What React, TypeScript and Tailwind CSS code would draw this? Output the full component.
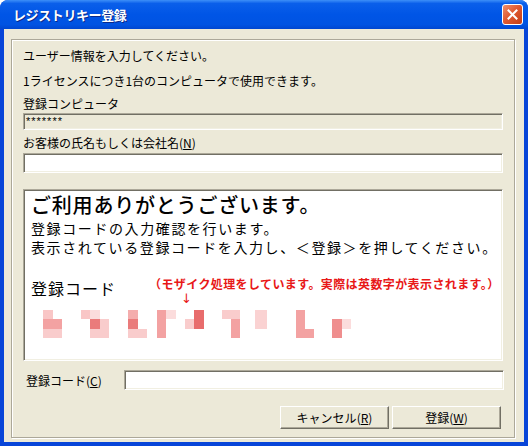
import React from "react";

const ui = "font-['Noto_Sans_CJK_JP',sans-serif]";

const mosaic: [number, number, number, number, string][] = [
  [43, 312, 10, 9, "#f9c6c6"],
  [43, 321, 10, 10, "#f3a2a2"],
  [53, 321, 9, 10, "#f3a2a2"],
  [43, 331, 19, 9, "#f9cccc"],
  [81, 312, 9, 9, "#f9c6c6"],
  [90, 312, 10, 9, "#fbdcdc"],
  [90, 321, 10, 10, "#ea7b7b"],
  [100, 321, 9, 10, "#f9cccc"],
  [90, 331, 19, 9, "#f9cccc"],
  [128, 312, 10, 9, "#f4adad"],
  [128, 321, 10, 10, "#ea7b7b"],
  [128, 331, 19, 9, "#f9cccc"],
  [157, 312, 9, 28, "#f3a2a2"],
  [166, 312, 10, 9, "#fbdcdc"],
  [185, 321, 9, 10, "#f9cccc"],
  [194, 312, 10, 19, "#e86c6c"],
  [222, 312, 18, 9, "#f9cccc"],
  [231, 321, 9, 19, "#f3a2a2"],
  [255, 312, 12, 19, "#fad2d2"],
  [296, 312, 9, 19, "#f3a2a2"],
  [296, 331, 18, 9, "#f3a2a2"],
  [332, 321, 10, 19, "#ef8e8e"],
  [342, 321, 9, 10, "#fbdcdc"],
];

function Sunken({ className = "", children }: { className?: string; children?: React.ReactNode }) {
  return (
    <div
      className={`border border-t-[#aca899] border-l-[#aca899] border-b-white border-r-white shadow-[inset_1px_1px_0_#716f64,inset_-1px_-1px_0_#f1efe2] ${className}`}
    >
      {children}
    </div>
  );
}

function Button({ label, mn }: { label: string; mn: string }) {
  return (
    <button className="w-[109px] h-[23px] bg-[#ece9d8] border border-t-white border-l-white border-b-[#716f64] border-r-[#716f64] shadow-[inset_-1px_-1px_0_#aca899] text-[12px] leading-[15px] text-black">
      {label}(<span className="underline">{mn}</span>)
    </button>
  );
}

export default function App() {
  return (
    <div className={`w-[528px] h-[446px] rounded-t-[8px] bg-[#0845d8] flex flex-col overflow-hidden ${ui}`}>
      <div className="h-[29px] flex items-center justify-between pl-[13px] pr-[5px] bg-[linear-gradient(to_bottom,#3d8ff8_0%,#0a5fea_12%,#0055e6_50%,#0053e2_85%,#0046d0_100%)]">
        <span className="text-white text-[13px] font-bold leading-none tracking-[-0.4px] [text-shadow:1px_1px_0_#0a2a8a]">レジストリキー登録</span>
        <div className="w-[21px] h-[21px] rounded-[3px] border border-white bg-[linear-gradient(135deg,#f0906c_0%,#e05a32_45%,#c43d14_100%)] flex items-center justify-center">
          <svg width="11" height="11" viewBox="0 0 11 11">
            <path d="M1.5 1.5 L9.5 9.5 M9.5 1.5 L1.5 9.5" stroke="white" strokeWidth="2" strokeLinecap="square" />
          </svg>
        </div>
      </div>

      <div className="flex-1 mx-[4px] mb-[4px] bg-[#ece9d8] pt-[10px] pl-[7px]">
        <div className="w-[504px] h-[399px] border border-[#aca899] shadow-[inset_1px_1px_0_#fff,1px_1px_0_#fff] pl-[11px] pr-[10px] pt-[8px] text-[12px] leading-[15px] text-black">
          <p className="h-[15px]">ユーザー情報を入力してください。</p>
          <p className="h-[15px] mt-[10px]">1ライセンスにつき1台のコンピュータで使用できます。</p>
          <p className="h-[15px] mt-[8px]">登録コンピュータ</p>
          <Sunken className="mt-[2px] h-[17px] w-[480px] bg-[#ece9d8] pl-[2px] flex items-center">
            <span className="text-[11px] leading-none tracking-[1px] font-['Liberation_Sans',sans-serif]">*******</span>
          </Sunken>
          <p className="h-[15px] mt-[5px]">
            お客様の氏名もしくは会社名(<span className="underline">N</span>)
          </p>
          <Sunken className="mt-[3px] h-[20px] w-[480px] bg-white" />

          <Sunken className="mt-[16px] h-[172px] w-[480px] bg-white pl-[7px] pt-[3px] overflow-hidden">
            <p className="text-[20px] leading-[24px] h-[24px] tracking-[0.8px] font-medium">ご利用ありがとうございます。</p>
            <p className="text-[14px] leading-[19px] h-[19px] mt-[2px] tracking-[1.6px]">登録コードの入力確認を行います。</p>
            <p className="text-[14px] leading-[19px] h-[19px] tracking-[1.6px] whitespace-nowrap">
              表示されている登録コードを入力し、＜登録＞を押してください。
            </p>
            <div className="flex items-start mt-[20px] h-[30px]">
              <span className="text-[16px] leading-[20px] mt-[1px] tracking-[1px]">登録コード</span>
              <div className="ml-[33px] flex flex-col text-[#e81818]">
                <span className="text-[12px] leading-[14px] font-bold whitespace-nowrap tracking-[0.4px]">
                  （モザイク処理をしています。実際は英数字が表示されます。）
                </span>
                <span className="pl-[32px] mt-[1px] text-[13px] leading-[13px] font-['DejaVu_Sans',sans-serif]">↓</span>
              </div>
            </div>
            <svg width="400" height="34" className="-ml-[7px] block">
              {mosaic.map(([x, y, w, h, c], i) => (
                <rect key={i} x={x - 24} y={y - 309} width={w} height={h} fill={c} />
              ))}
            </svg>
          </Sunken>

          <div className="mt-[9px] flex items-center h-[20px]">
            <span className="pl-[3px]">
              登録コード(<span className="underline">C</span>)
            </span>
            <Sunken className="ml-auto h-[20px] w-[380px] bg-white" />
          </div>

          <div className="mt-[16px] flex justify-end gap-[3px] pr-[3px]">
            <Button label="キャンセル" mn="R" />
            <Button label="登録" mn="W" />
          </div>
        </div>
      </div>
    </div>
  );
}
